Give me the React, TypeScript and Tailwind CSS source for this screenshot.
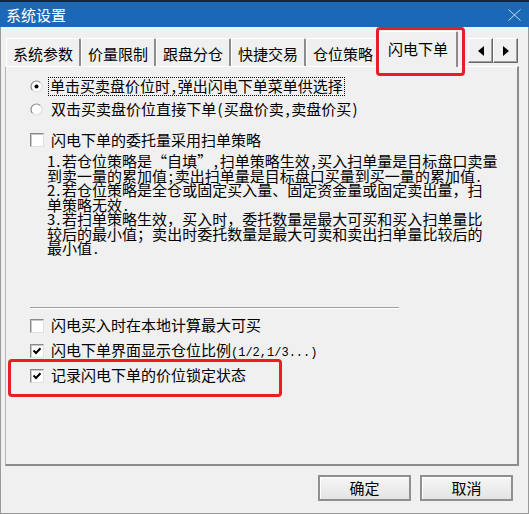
import React from "react";

const F = "font-['Noto_Sans_CJK_SC','Noto_Sans',sans-serif]";

function T({ t }: { t: string }) {
  return (
    <>
      {Array.from(t).map((c, i) => {
        if (c.charCodeAt(0) < 128)
          return (
            <span key={i} className="inline-block w-[7.5px] text-center">
              {c}
            </span>
          );
        return <React.Fragment key={i}>{c}</React.Fragment>;
      })}
    </>
  );
}

function Radio({ checked }: { checked?: boolean }) {
  return (
    <svg width="13" height="13" viewBox="0 0 13 13" className="shrink-0">
      <circle cx="6.5" cy="6.5" r="5.5" fill="#fff" />
      <path d="M2.6 10.4 A5.5 5.5 0 0 1 10.4 2.6" stroke="#8a8a8a" strokeWidth="1.2" fill="none" />
      <path d="M10.4 2.6 A5.5 5.5 0 0 1 2.6 10.4" stroke="#dedede" strokeWidth="1.2" fill="none" />
      {checked && <circle cx="6.5" cy="6.5" r="2" fill="#000" />}
    </svg>
  );
}

function Check({ checked }: { checked?: boolean }) {
  return (
    <div className="w-[14px] h-[14px] shrink-0 bg-white border border-t-[#8a8a8a] border-l-[#8a8a8a] border-r-[#e0e0e0] border-b-[#e0e0e0] shadow-[inset_1px_1px_0_#c8c8c8] flex items-center justify-center">
      {checked && (
        <svg width="10" height="10" viewBox="0 0 10 10">
          <path d="M1.5 4.5 L4 7 L8.5 2.2" stroke="#000" strokeWidth="2" fill="none" />
        </svg>
      )}
    </div>
  );
}

function Tab({ label }: { label: string }) {
  return (
    <div className="w-[75px] h-[28px] shrink-0 flex items-center justify-center pt-[3px] border-t border-l border-white border-r-2 border-r-[#8c8c8c] rounded-t-[2px] text-[15px] text-black">
      {label}
    </div>
  );
}

function ArrowBtn({ dir }: { dir: "l" | "r" }) {
  return (
    <div className="w-[25px] h-[25px] flex items-center justify-center bg-[#f0f0f0] border border-t-white border-l-white border-r-[#696969] border-b-[#696969] shadow-[inset_-1px_-1px_0_#a0a0a0]">
      <svg width="6" height="10" viewBox="0 0 6 10">
        {dir === "l" ? <path d="M6 0 L0 5 L6 10 Z" fill="#000" /> : <path d="M0 0 L6 5 L0 10 Z" fill="#000" />}
      </svg>
    </div>
  );
}

function Btn({ label }: { label: string }) {
  return (
    <div className="w-[93px] h-[26px] flex items-center justify-center text-[15px] text-black border-2 border-[#8f8f8f] bg-gradient-to-b from-[#f6f6f6] to-[#e4e4e4] shadow-[inset_1px_1px_0_#ffffff]">
      {label}
    </div>
  );
}

export default function App() {
  const para = [
    "1.若仓位策略是“自填”,扫单策略生效,买入扫单量是目标盘口卖量",
    "到卖一量的累加值;卖出扫单量是目标盘口买量到买一量的累加值.",
    "2.若仓位策略是全仓或固定买入量、固定资金量或固定卖出量，扫",
    "单策略无效.",
    "3.若扫单策略生效，买入时，委托数量是最大可买和买入扫单量比",
    "较后的最小值；卖出时委托数量是最大可卖和卖出扫单量比较后的",
    "最小值.",
  ];
  return (
    <div className={`relative w-[529px] h-[514px] flex flex-col bg-[#f0f0f0] ${F} text-black overflow-hidden`}>
      {/* title bar */}
      <div className="h-[27px] shrink-0 bg-[#1b69b6] border-t-2 border-[#1a2433] flex items-center justify-between pl-[6px] pr-[8px]">
        <span className="text-white text-[15px] leading-none">系统设置</span>
        <svg width="13" height="12" viewBox="0 0 13 12">
          <path d="M0.5 0.5 L12.5 11.5 M12.5 0.5 L0.5 11.5" stroke="#c9dcf0" strokeWidth="1" />
        </svg>
      </div>

      {/* body */}
      <div className="flex-1 flex flex-col border-l border-r border-b border-[#9a9a9a]">
        {/* tab row */}
        <div className="h-[39px] shrink-0 flex items-end pl-[5px] pr-[10px]">
          <Tab label="系统参数" />
          <Tab label="价量限制" />
          <Tab label="跟盘分仓" />
          <Tab label="快捷交易" />
          <Tab label="仓位策略" />
          <div className="relative z-10 -ml-[2px] -mb-[1px] w-[79px] h-[36px] shrink-0 bg-[#f0f0f0] flex items-center justify-center pt-[1px] pb-[1px] border-t border-l border-white border-r-2 border-r-[#8c8c8c] rounded-t-[2px] text-[15px]">
            闪电下单
          </div>
          <div className="ml-auto self-start mt-[11px] flex">
            <ArrowBtn dir="l" />
            <ArrowBtn dir="r" />
          </div>
        </div>

        {/* panel */}
        <div className="ml-[4px] w-[514px] h-[400px] shrink-0 border-t border-t-white border-l border-l-[#b9b9b9] border-r-2 border-r-[#8c8c8c] border-b-2 border-b-[#8c8c8c] pl-[24px] pt-[10px] flex flex-col text-[15px]">
          <div className="h-[18px] flex items-center">
            <Radio checked />
            <span className="ml-[5px] px-[1px] h-[19px] flex items-center border border-dotted border-black whitespace-nowrap">
              <T t="单击买卖盘价位时,弹出闪电下单菜单供选择" />
            </span>
          </div>
          <div className="mt-[5px] h-[18px] flex items-center">
            <Radio />
            <span className="ml-[8px] whitespace-nowrap">
              <T t="双击买卖盘价位直接下单(买盘价卖,卖盘价买)" />
            </span>
          </div>
          <div className="mt-[13px] h-[18px] flex items-center">
            <Check />
            <span className="ml-[7px] whitespace-nowrap">闪电下单的委托量采用扫单策略</span>
          </div>
          <div className="mt-[5px] ml-[17px] leading-[14.5px] text-[15px]">
            {para.map((l, i) => (
              <div key={i} className="whitespace-nowrap h-[14.5px]">
                <T t={l} />
              </div>
            ))}
          </div>
          <div className="mt-[51px] w-[369px] h-[2px] border-t border-t-[#a0a0a0] border-b border-b-white" />
          <div className="mt-[8px] h-[18px] flex items-center">
            <Check />
            <span className="ml-[7px] whitespace-nowrap">闪电买入时在本地计算最大可买</span>
          </div>
          <div className="mt-[7px] h-[18px] flex items-center">
            <Check checked />
            <span className="ml-[7px] whitespace-nowrap">
              闪电下单界面显示仓位比例
              <span className="font-['Liberation_Mono',monospace] text-[12px]">(1/2,1/3...)</span>
            </span>
          </div>
          <div className="mt-[7px] h-[18px] flex items-center">
            <Check checked />
            <span className="ml-[7px] whitespace-nowrap">记录闪电下单的价位锁定状态</span>
          </div>
        </div>

        {/* footer */}
        <div className="pt-[9px] pr-[15px] flex justify-end gap-[9px]">
          <Btn label="确定" />
          <Btn label="取消" />
        </div>
      </div>

      {/* annotations */}
      <div className="absolute left-[376px] top-[27px] w-[89px] h-[49px] border-[3px] border-[#ec1c24] rounded-[4px] z-20" />
      <div className="absolute left-[8px] top-[359px] w-[274px] h-[38px] border-[3px] border-[#ec1c24] rounded-[4px] z-20" />
    </div>
  );
}
